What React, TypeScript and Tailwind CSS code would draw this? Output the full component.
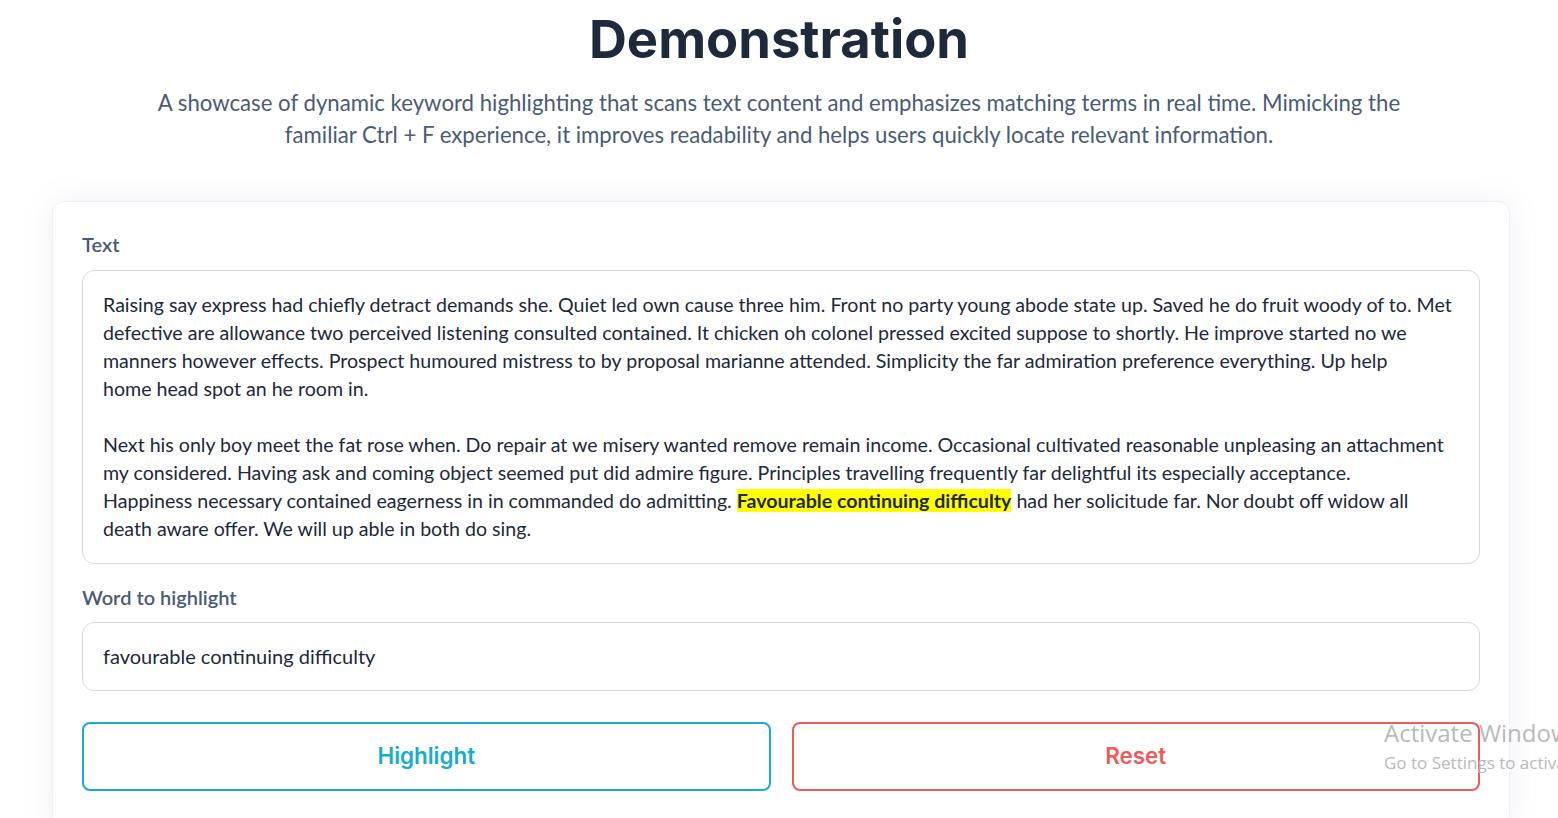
import React from "react";

const para1Lines = [
  "Raising say express had chiefly detract demands she. Quiet led own cause three him. Front no party young abode state up. Saved he do fruit woody of to. Met",
  "defective are allowance two perceived listening consulted contained. It chicken oh colonel pressed excited suppose to shortly. He improve started no we",
  "manners however effects. Prospect humoured mistress to by proposal marianne attended. Simplicity the far admiration preference everything. Up help",
  "home head spot an he room in.",
];
const para2Lines = [
  "Next his only boy meet the fat rose when. Do repair at we misery wanted remove remain income. Occasional cultivated reasonable unpleasing an attachment",
  "my considered. Having ask and coming object seemed put did admire figure. Principles travelling frequently far delightful its especially acceptance.",
];

export default function App() {
  return (
    <div className="relative min-h-[818px] w-full overflow-hidden bg-white font-['Lato',sans-serif]">
      <div className="flex flex-col items-center pt-[13px]">
        <h1 className="font-['Inter',sans-serif] text-[52.5px] font-bold leading-none text-[#1e293b]">
          Demonstration
        </h1>
        <p className="mt-[21px] max-w-[1260px] text-center text-[22.2px] leading-8 text-[#4a5b78]">
          A showcase of dynamic keyword highlighting that scans text content and emphasizes matching terms in real time. Mimicking the familiar Ctrl + F experience, it improves readability and helps users quickly locate relevant information.
        </p>
      </div>

      <div className="ml-[52px] mr-[48px] mt-[50px] rounded-xl border border-[#eef0f5] bg-white px-[29px] pb-10 pt-[30px] shadow-[0_0_30px_rgba(120,130,170,0.12)]">
        <label className="block text-[20px] font-semibold leading-6 text-[#4a5b78]">Text</label>
        <div className="mt-[14px] rounded-xl border border-[#d6d7e0] px-5 py-5 text-[19.6px] leading-7 text-[#1e293b]">
          <div>
            {para1Lines.map((l) => (
              <div key={l} className="whitespace-nowrap">{l}</div>
            ))}
          </div>
          <div className="mt-7">
            {para2Lines.map((l) => (
              <div key={l} className="whitespace-nowrap">{l}</div>
            ))}
            <div className="whitespace-nowrap">
              Happiness necessary contained eagerness in in commanded do admitting.{" "}
              <mark className="bg-[#ffff00] font-bold text-[#1e293b]">Favourable continuing difficulty</mark> had her solicitude far. Nor doubt off widow all
            </div>
            <div className="whitespace-nowrap">death aware offer. We will up able in both do sing.</div>
          </div>
        </div>

        <label className="mt-[21px] block text-[20px] font-semibold leading-6 text-[#4a5b78]">Word to highlight</label>
        <div className="mt-[13px] flex h-[69px] items-center rounded-xl border border-[#d6d7e0] px-5 text-[20px] text-[#1e293b]">
          favourable continuing difficulty
        </div>

        <div className="mt-[31px] grid grid-cols-2 gap-[21px]">
          <button className="h-[69px] rounded-lg border-2 border-[#17acd0] bg-white font-['Inter',sans-serif] text-[22.4px] font-semibold text-[#17acd0]">
            Highlight
          </button>
          <button className="h-[69px] rounded-lg border-2 border-[#ee5b5b] bg-white font-['Inter',sans-serif] text-[22.4px] font-semibold text-[#ee5b5b]">
            Reset
          </button>
        </div>
      </div>

      <div className="pointer-events-none absolute left-[1384px] top-[718px] whitespace-nowrap font-['Open_Sans',sans-serif] text-[#b9b9b9]">
        <div className="text-[24px] leading-[30px]">Activate Windows</div>
        <div className="mt-[3px] text-[17px] leading-[24px]">Go to Settings to activate Windows.</div>
      </div>
    </div>
  );
}
